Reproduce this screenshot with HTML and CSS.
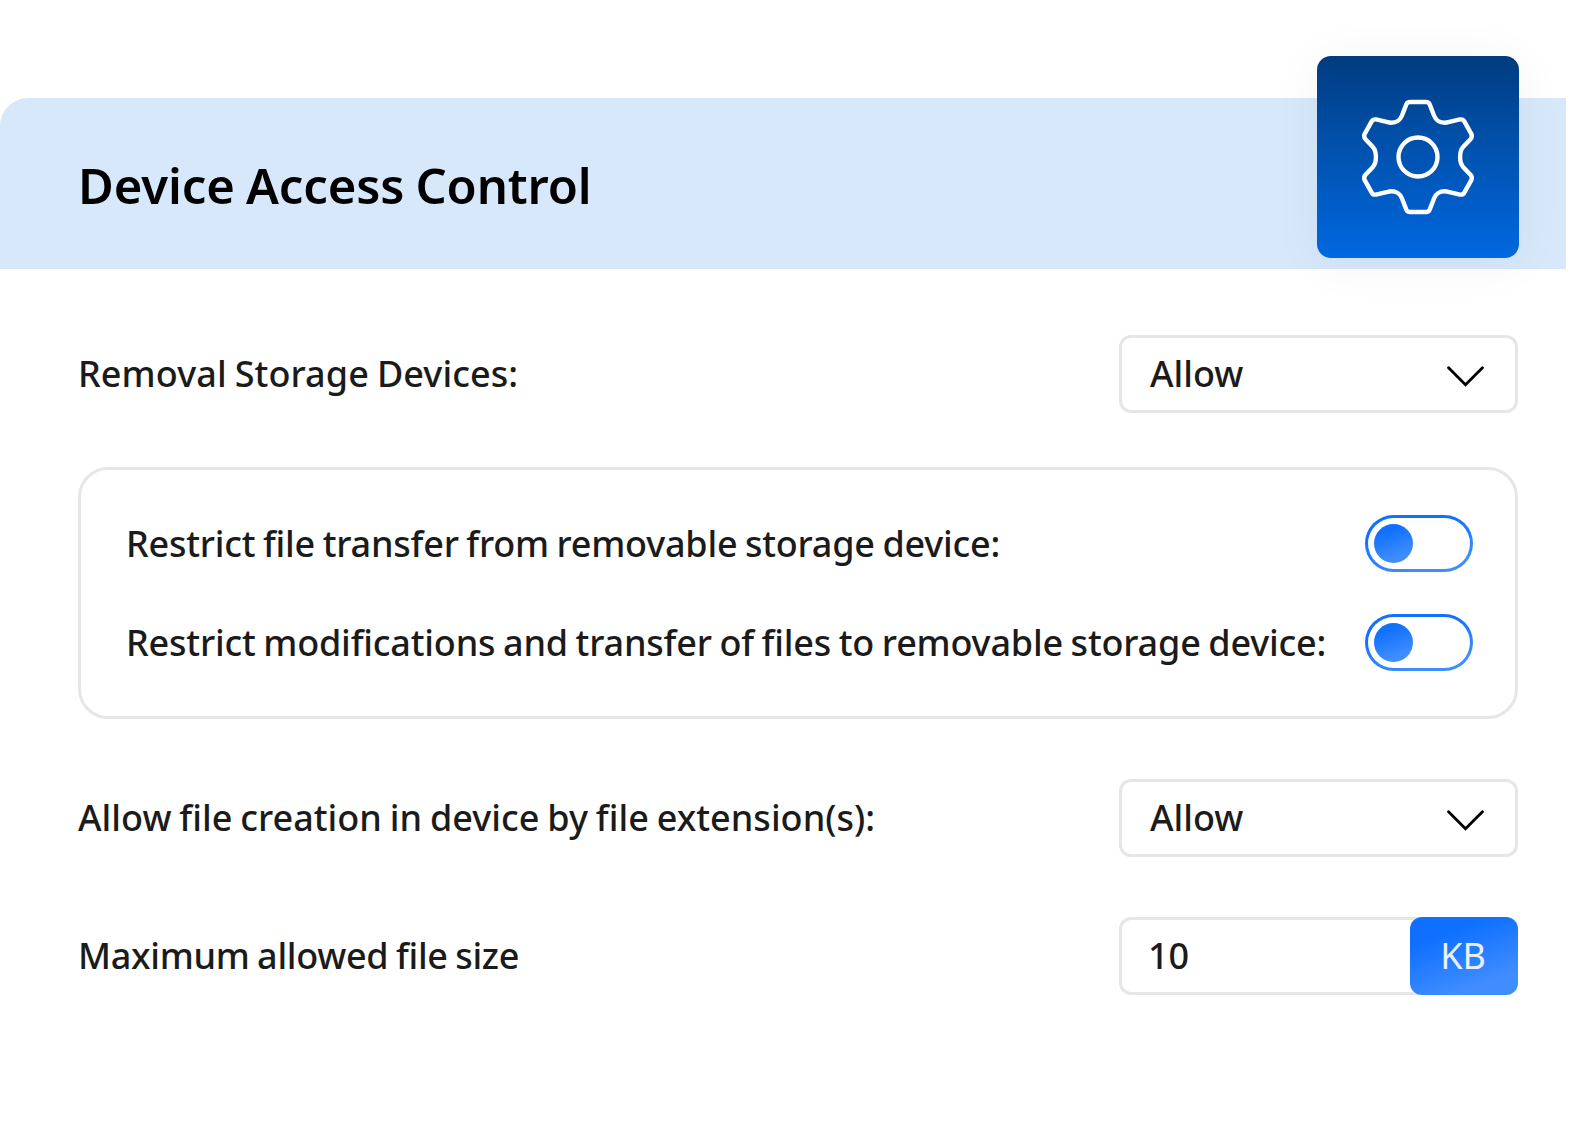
FILE: index.html
```html
<!DOCTYPE html>
<html lang="en">
<head>
    <meta charset="UTF-8">
    <meta name="viewport" content="width=device-width, initial-scale=1.0">
    <title>Device Access Control</title>
    <link rel="stylesheet" href="styles.css">
</head>
<body>
    <div class="panel">
        <div class="panel-header">
            <h2>Device Access Control</h2>
            <div class="settings-tile">
                <svg class="gear" viewBox="-60 -60 120 120">
                    <path d="M-8 -55H8Q10.700 -55 11.700 -52.600L16 -41.500C18.500 -35.500 22 -34.200 27 -34.200Q28.500 -34.200 30.300 -34.800L42 -37.600Q45 -38 46.300 -35.600L53.300 -23.200Q54.700 -20.300 52.500 -17.800L45.300 -10.200C41 -5.500 41 5.500 45.300 10.200L52.500 17.800Q54.700 20.300 53.300 23.200L46.300 35.600Q45 38 42 37.600L30.300 34.800Q28.500 34.200 27 34.200C22 34.200 18.500 35.500 16 41.500L11.700 52.600Q10.700 55 8 55H-8Q-10.700 55 -11.700 52.600L-16 41.500C-18.500 35.500 -22 34.200 -27 34.200Q-28.500 34.200 -30.300 34.800L-42 37.600Q-45 38 -46.300 35.600L-53.300 23.200Q-54.700 20.300 -52.500 17.800L-45.300 10.200C-41 5.500 -41 -5.500 -45.300 -10.200L-52.500 -17.800Q-54.700 -20.300 -53.300 -23.200L-46.300 -35.600Q-45 -38 -42 -37.600L-30.300 -34.800Q-28.500 -34.200 -27 -34.200C-22 -34.200 -18.500 -35.500 -16 -41.500L-11.700 -52.600Q-10.700 -55 -8 -55Z"/>
                    <circle r="19.500"/>
                </svg>
            </div>
        </div>

        <div class="panel-body">
            <div class="row">
                <label class="l-removal">Removal Storage Devices:</label>
                <div class="select">
                    <span class="value">Allow</span>
                    <svg class="chevron" viewBox="0 0 36 20"><path d="M1.500 1.500L18 18L34.500 1.500"/></svg>
                </div>
            </div>

            <div class="restrict-box">
                <div class="restrict-row">
                    <label class="l-from">Restrict file transfer from removable storage device:</label>
                    <div class="toggle"><span class="knob"></span></div>
                </div>
                <div class="restrict-row">
                    <label class="l-to">Restrict modifications and transfer of files to removable storage device:</label>
                    <div class="toggle"><span class="knob"></span></div>
                </div>
            </div>

            <div class="row">
                <label class="l-ext">Allow file creation in device by file extension(s):</label>
                <div class="select">
                    <span class="value">Allow</span>
                    <svg class="chevron" viewBox="0 0 36 20"><path d="M1.500 1.500L18 18L34.500 1.500"/></svg>
                </div>
            </div>

            <div class="row size-row">
                <label class="l-size">Maximum allowed file size</label>
                <div class="size-input">
                    <span class="number">10</span>
                    <span class="unit">KB</span>
                </div>
            </div>
        </div>
    </div>
</body>
</html>
```
FILE: styles.css
```css
* {
    box-sizing: border-box;
}

body {
    margin: 0;
    background-color: #fff;
    font-family: "Noto Sans", sans-serif;
    color: #1b1b1b;
}

.panel {
    width: 1566px;
    padding-top: 98px;
}

/* Header */
.panel-header {
    display: flex;
    justify-content: space-between;
    align-items: center;
    height: 171px;
    padding: 0 47px 0 78px;
    background-color: #d7e8fa;
    border-top-left-radius: 28px;
}

h2 {
    margin: 2px 0 0;
    font-size: 49px;
    font-weight: 600;
    line-height: 60px;
    letter-spacing: -0.12px;
    word-spacing: -1.5px;
    color: #000;
    white-space: nowrap;
}

.settings-tile {
    display: flex;
    align-items: center;
    justify-content: center;
    width: 202px;
    height: 202px;
    margin-bottom: 53px;
    border-radius: 14px;
    background: linear-gradient(#003c80, #004fa8 40%, #0068e1);
    box-shadow: 0 5px 50px rgba(0, 0, 40, 0.05);
}

.gear {
    width: 120px;
    height: 120px;
    fill: none;
    stroke: #fff;
    stroke-width: 4.4;
    stroke-linejoin: round;
}

/* Form rows */
.panel-body {
    padding: 66px 48px 0 78px;
}

.row {
    display: flex;
    justify-content: space-between;
    align-items: center;
    height: 78px;
}

label,
.value,
.number {
    font-size: 36px;
    font-weight: 500;
    line-height: 48px;
    white-space: nowrap;
}

label {
    word-spacing: -1.5px;
}

.l-removal {
    letter-spacing: 0.09px;
}

.l-from {
    letter-spacing: -0.22px;
}

.l-to {
    letter-spacing: -0.19px;
}

.l-ext {
    letter-spacing: 0.02px;
}

.l-size {
    letter-spacing: -0.3px;
}

.select,
.size-input {
    display: flex;
    justify-content: space-between;
    align-items: center;
    width: 399px;
    height: 78px;
    border: 3px solid #e6e6e6;
    border-radius: 12px;
}

.select {
    padding: 0 31px 0 28px;
}

.chevron {
    width: 37px;
    height: 21px;
    margin-top: 4px;
    fill: none;
    stroke: #000;
    stroke-width: 2.7;
    stroke-linecap: round;
}

/* Restrictions */
.restrict-box {
    height: 252px;
    margin: 54px 0 60px;
    padding: 45px 42px 0 45px;
    border: 3px solid #e6e6e6;
    border-radius: 30px;
}

.restrict-row {
    display: flex;
    justify-content: space-between;
    align-items: center;
    height: 57px;
    margin-bottom: 42px;
}

.toggle {
    display: flex;
    align-items: center;
    flex-shrink: 0;
    width: 108px;
    height: 57px;
    padding-left: 6px;
    border: 3px solid transparent;
    border-radius: 29px;
    background: linear-gradient(#fff, #fff) padding-box, linear-gradient(165deg, #1070ff 30%, #3f8dff 80%) border-box;
}

.knob {
    width: 39px;
    height: 39px;
    border-radius: 50%;
    background: linear-gradient(160deg, #0f70ff 20%, #408dff 80%);
}

/* File size */
.size-row {
    margin-top: 60px;
}

.size-input {
    padding-left: 26px;
}

.unit {
    width: 108px;
    height: 78px;
    margin-right: -3px;
    padding-right: 2px;
    border-radius: 12px;
    background: linear-gradient(160deg, #0f70ff 25%, #408dff 80%);
    color: #e8f0fc;
    font-size: 36px;
    line-height: 77px;
    text-align: center;
}
```
